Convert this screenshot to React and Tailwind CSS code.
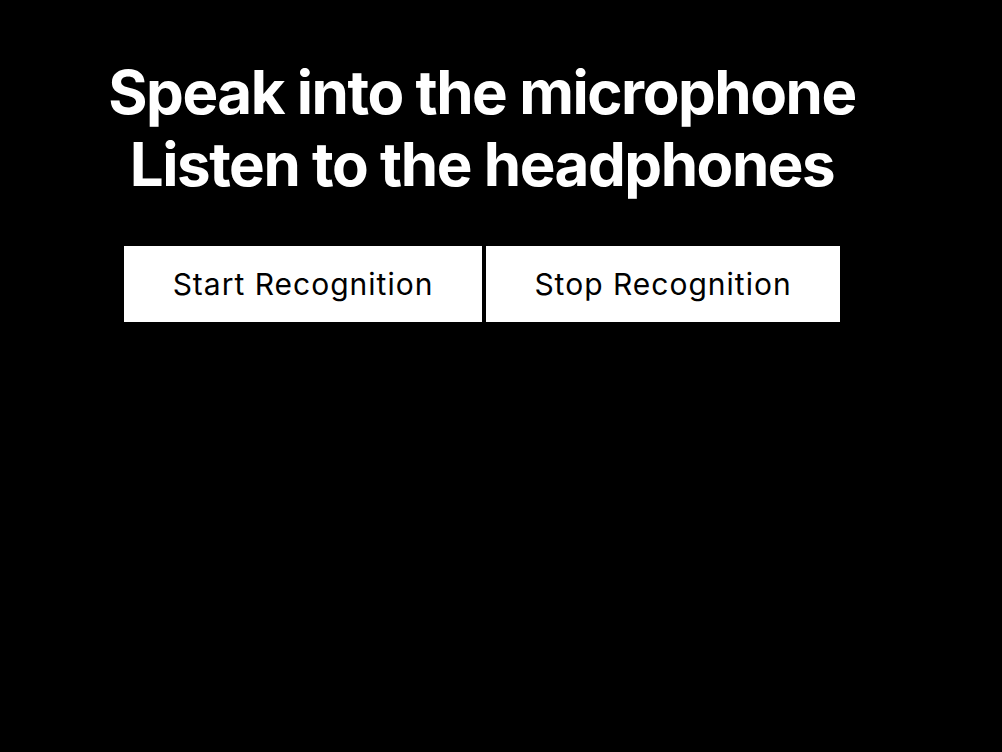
import React from "react";

const App = () => {
  return (
    <div className="min-h-[752px] w-full bg-black font-['Inter',sans-serif]">
      <div className="w-[964px] pt-[56px] text-center">
        {/* Heading */}
        <h1 className="text-[60px] font-bold leading-[72px] tracking-[-1.45px] text-white">
          Speak into the microphone
          <br />
          Listen to the headphones
        </h1>

        {/* Controls */}
        <div className="mt-[46px] flex justify-center gap-1">
          <button className="h-[76px] w-[358px] bg-white text-[30px] tracking-[1px] text-black">
            Start Recognition
          </button>
          <button className="h-[76px] w-[354px] bg-white text-[30px] tracking-[1px] text-black">
            Stop Recognition
          </button>
        </div>
      </div>
    </div>
  );
};

export default App;
